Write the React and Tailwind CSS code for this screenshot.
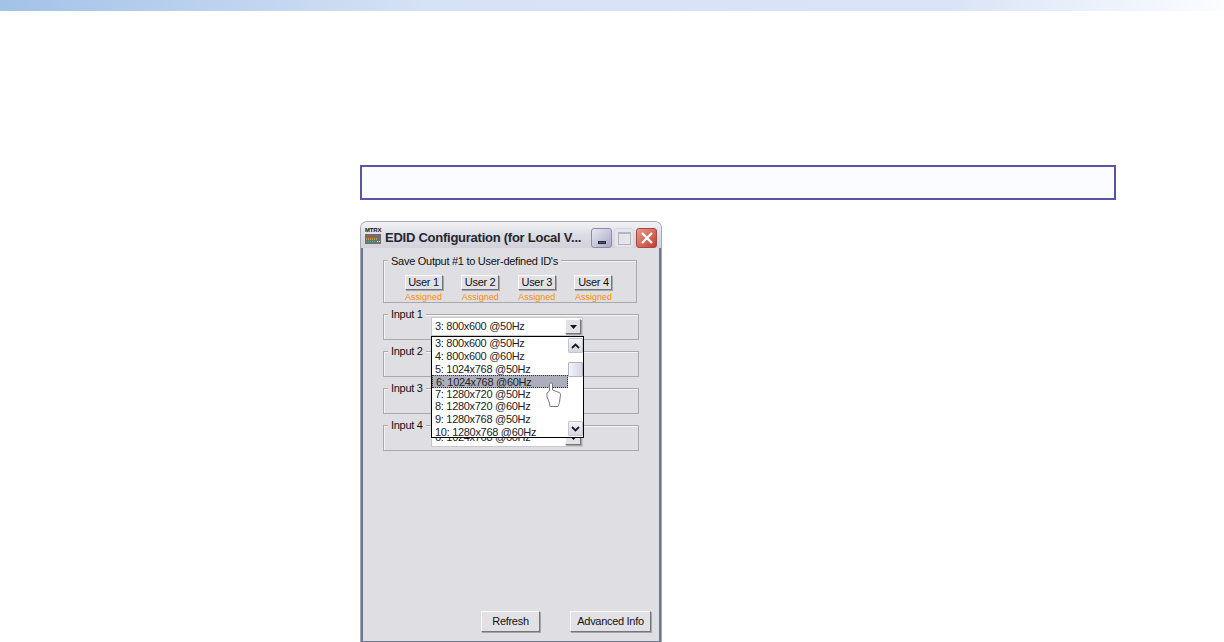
const USERS = ["User 1", "User 2", "User 3", "User 4"];
const LIST = [
  "3: 800x600 @50Hz",
  "4: 800x600 @60Hz",
  "5: 1024x768 @50Hz",
  "6: 1024x768 @60Hz",
  "7: 1280x720 @50Hz",
  "8: 1280x720 @60Hz",
  "9: 1280x768 @50Hz",
  "10: 1280x768 @60Hz",
];
const INPUTS = [
  { name: "Input 1", value: "3: 800x600 @50Hz" },
  { name: "Input 2", value: "4: 800x600 @60Hz" },
  { name: "Input 3", value: "6: 1024x768 @60Hz" },
  { name: "Input 4", value: "6: 1024x768 @60Hz" },
];

const raised =
  "border border-t-[#fbfbfb] border-l-[#fbfbfb] border-r-[#75757a] border-b-[#75757a] shadow-[1px_1px_0_#a5a5aa]";

function WinButton({ className, children }) {
  return (
    <button type="button" className={`flex items-center justify-center bg-[#e2e2e6] text-[11px] tracking-[-0.3px] text-[#111] ${raised} ${className}`}>
      {children}
    </button>
  );
}

function Arrow({ up, down }) {
  return (
    <div className="flex h-[15px] w-[15px] items-center justify-center rounded-[1px] border border-[#c0c4d4] bg-gradient-to-b from-[#f4f4f8] to-[#d4d6e2]">
      <svg width="9" height="6" viewBox="0 0 9 6">
        {up && <path d="M1 5 L4.5 1.5 L8 5" fill="none" stroke="#1a1a22" strokeWidth="1.8" />}
        {down && <path d="M1 1 L4.5 4.5 L8 1" fill="none" stroke="#1a1a22" strokeWidth="1.8" />}
      </svg>
    </div>
  );
}

function InputGroup({ name, value }) {
  return (
    <div className="relative ml-[20px] h-[26px] w-[256px] border border-[#a9a9ad] shadow-[inset_1px_1px_0_#f4f4f6]">
      <span className="absolute left-[4px] top-[-7px] bg-[#dfdfe3] px-[3px] text-[11px] leading-[12px] tracking-[-0.3px] text-[#111]">{name}</span>
      <div className="absolute left-[47px] top-[2px] flex h-[19px] w-[152px] items-center border border-[#c8c8cc] bg-white pl-[3px] text-[11px] tracking-[-0.3px] text-[#222]">
        <span className="flex-1">{value}</span>
        <div className={`mr-[1px] flex h-[15px] w-[16px] items-center justify-center bg-[#e2e2e6] ${raised}`}>
          <svg width="7" height="4" viewBox="0 0 7 4">
            <path d="M0 0 H7 L3.5 4 Z" fill="#111" />
          </svg>
        </div>
      </div>
    </div>
  );
}

export default function App() {
  return (
    <div className="h-[642px] w-[1224px] overflow-hidden bg-white font-['Liberation_Sans',sans-serif]">
      <div className="h-[11px] w-full bg-[linear-gradient(to_right,#a3c2e8,#d6e2f5_35%,#dbe4f6_78%,#fbfdff)]" />

      <div className="pl-[360px] pt-[154px]">
        <div className="h-[35px] w-[756px] border-2 border-[#5a54a8] bg-[#fbfcff]" />

        <div className="mt-[21px] flex h-[421px] w-[302px] flex-col overflow-hidden rounded-t-[7px] border border-[#a8a8b4] border-b-0 bg-[#dfdfe3]">
          {/* title bar */}
          <div className="flex h-[26px] shrink-0 items-end bg-gradient-to-b from-[#f2f2f6] via-[#dcdce4] to-[#d2d2dc] pl-[4px] pr-[4px]">
            <div className="relative mb-[4px] h-[16px] w-[16px] shrink-0">
              <span className="absolute left-0 top-[-2px] text-[6px] font-bold leading-[8px] tracking-[-0.2px] text-[#111]">MTRX</span>
              <svg className="absolute bottom-0 left-0" width="16" height="10" viewBox="0 0 16 10">
                <rect width="16" height="10" fill="#6e6e6e" />
                <path d="M1 2.5 H10" stroke="#e03a3a" strokeWidth="1" strokeDasharray="1 1" />
                <path d="M1 5 H12" stroke="#e8d23a" strokeWidth="1" strokeDasharray="1 1" />
                <path d="M1 7.5 H10" stroke="#40c060" strokeWidth="1" strokeDasharray="1 1" />
                <path d="M12 7.5 H15" stroke="#fff" strokeWidth="1" strokeDasharray="1 1" />
              </svg>
            </div>
            <span className="mb-[2px] ml-[4px] min-w-0 flex-1 whitespace-nowrap text-[13px] font-bold leading-[16px] tracking-[-0.25px] text-[#26262c]">EDID Configuration (for Local V...</span>
            <div className="flex items-center gap-[2px]">
              <div className="flex h-[20px] w-[21px] items-end justify-center rounded-[3px] border border-[#8c8ca4] bg-gradient-to-br from-[#e8e8f2] to-[#a8a8c4] pb-[3px]">
                <div className="h-[3px] w-[8px] border border-[#23233a] bg-[#5a5a78]" />
              </div>
              <div className="flex h-[20px] w-[20px] items-center justify-center rounded-[3px] border border-[#d8d8de] bg-[#e4e4ea]">
                <div className="h-[13px] w-[13px] border border-[#b4b4c0] border-t-2" />
              </div>
              <div className="flex h-[20px] w-[21px] items-center justify-center rounded-[3px] border border-[#a04a48] bg-gradient-to-br from-[#e89a88] to-[#c03a30]">
                <svg width="14" height="14" viewBox="0 0 14 14">
                  <path d="M2 2 L12 12 M12 2 L2 12" stroke="#fff" strokeWidth="2.4" />
                </svg>
              </div>
            </div>
          </div>

          {/* client area */}
          <div className="relative flex min-h-0 flex-1 flex-col border-x-2 border-[#6f7690] bg-[#dfdfe3]">
            <div className="relative ml-[20px] mt-[12px] h-[43px] w-[254px] border border-[#a9a9ad] shadow-[inset_1px_1px_0_#f4f4f6]">
              <span className="absolute left-[4px] top-[-6px] whitespace-nowrap bg-[#dfdfe3] px-[3px] text-[11px] leading-[12px] tracking-[-0.27px] text-[#111]">
                Save Output #1 to User-defined ID's
              </span>
              <div className="mt-[14px] flex justify-between pl-[20px] pr-[23px]">
                {USERS.map((u) => (
                  <div key={u} className="flex w-[39px] flex-col items-center">
                    <WinButton className="h-[15px] w-[38px]">{u}</WinButton>
                    <span className="mt-[2px] whitespace-nowrap text-[9px] leading-[11px] text-[#ff8a00]">Assigned</span>
                  </div>
                ))}
              </div>
            </div>

            <div className="mt-[11px] flex flex-col gap-[11px]">
              {INPUTS.map((i) => (
                <InputGroup key={i.name} name={i.name} value={i.value} />
              ))}
            </div>

            <div className="mt-auto mb-[9px] mr-[8px] flex justify-end gap-[30px]">
              <WinButton className="h-[21px] w-[59px]">Refresh</WinButton>
              <WinButton className="h-[21px] w-[81px]">Advanced Info</WinButton>
            </div>

            {/* open dropdown */}
            <div className="absolute left-[68px] top-[88px] flex h-[102px] w-[153px] border border-black bg-white text-[11px] tracking-[-0.3px] text-[#222]">
              <div className="flex-1 overflow-hidden pt-[0.4px]">
                {LIST.map((row, i) => (
                  <div
                    key={row}
                    className={`h-[12.6px] whitespace-nowrap pl-[3px] leading-[12.6px] ${i === 3 ? "border border-dotted border-[#333] bg-[#acafbb] pl-[2px] leading-[10.6px]" : ""}`}
                  >
                    {row}
                  </div>
                ))}
              </div>
              <div className="flex w-[15px] shrink-0 flex-col bg-white py-[1px]">
                <Arrow up />
                <div className="mt-[9px] h-[15px] w-[15px] rounded-[1px] border border-[#b0b4c8] bg-gradient-to-r from-[#f4f4f8] to-[#d4d6e2]" />
                <div className="flex-1" />
                <Arrow down />
              </div>
            </div>

            {/* hand cursor */}
            <svg className="absolute left-[183px] top-[134px]" width="16" height="26" viewBox="0 0 16 26">
              <path
                d="M3.5 2 C3.5 .5 6.5 .5 6.5 2 V8 L13 10.5 C14.5 11 14.5 12 14.5 13 L13.5 20 C13.5 21 13 21.5 12 24.5 H4 L3.5 21 L1 15 V11 L3.5 9 Z"
                fill="#fff"
                stroke="#7a7a7a"
                strokeWidth="1"
              />
            </svg>
          </div>
          <div className="h-[1px] shrink-0 bg-[#6f7690]" />
        </div>
      </div>
    </div>
  );
}
